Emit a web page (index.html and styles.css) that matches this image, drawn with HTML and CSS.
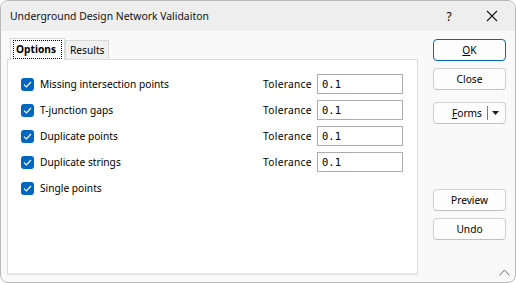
FILE: index.html
```html
<!DOCTYPE html>
<html>
<head>
<meta charset="utf-8">
<link rel="stylesheet" href="styles.css">
</head>
<body>
<div class="window">
  <div class="titlebar">
    <span class="title">Underground Design Network Validaiton</span>
    <span class="help">?</span>
    <span class="close-x">
      <svg width="12" height="12" viewBox="0 0 12 12"><path d="M1 1 L11 11 M11 1 L1 11" stroke="#1a1a1a" stroke-width="1.1" fill="none"/></svg>
    </span>
  </div>
  <div class="content">
    <div class="left">
      <div class="tabs">
        <div class="tab active"><span class="focus">Options</span></div>
        <div class="tab">Results</div>
      </div>
      <div class="panel">
        <div class="row">
          <label class="check"><span class="box"><svg width="9" height="7" viewBox="0 0 9 7"><path d="M1 3.6 L3.4 6 L8 1" stroke="#fff" stroke-width="1.2" fill="none"/></svg></span>Missing intersection points</label>
          <span class="tol">Tolerance</span><span class="field">0.1</span>
        </div>
        <div class="row">
          <label class="check"><span class="box"><svg width="9" height="7" viewBox="0 0 9 7"><path d="M1 3.6 L3.4 6 L8 1" stroke="#fff" stroke-width="1.2" fill="none"/></svg></span>T-junction gaps</label>
          <span class="tol">Tolerance</span><span class="field">0.1</span>
        </div>
        <div class="row">
          <label class="check"><span class="box"><svg width="9" height="7" viewBox="0 0 9 7"><path d="M1 3.6 L3.4 6 L8 1" stroke="#fff" stroke-width="1.2" fill="none"/></svg></span>Duplicate points</label>
          <span class="tol">Tolerance</span><span class="field">0.1</span>
        </div>
        <div class="row">
          <label class="check"><span class="box"><svg width="9" height="7" viewBox="0 0 9 7"><path d="M1 3.6 L3.4 6 L8 1" stroke="#fff" stroke-width="1.2" fill="none"/></svg></span>Duplicate strings</label>
          <span class="tol">Tolerance</span><span class="field">0.1</span>
        </div>
        <div class="row">
          <label class="check"><span class="box"><svg width="9" height="7" viewBox="0 0 9 7"><path d="M1 3.6 L3.4 6 L8 1" stroke="#fff" stroke-width="1.2" fill="none"/></svg></span>Single points</label>
        </div>
      </div>
    </div>
    <div class="buttons">
      <div class="btn default"><u>O</u>K</div>
      <div class="btn b-close">Close</div>
      <div class="btn forms"><span class="forms-label"><u>F</u>orms</span><span class="sep"></span><span class="arrow"><svg width="7" height="4" viewBox="0 0 7 4"><path d="M0 0 L7 0 L3.5 4 Z" fill="#1a1a1a"/></svg></span></div>
      <div class="spacer"></div>
      <div class="btn">Preview</div>
      <div class="btn b-undo">Undo</div>
    </div>
  </div>
  <svg class="grip" width="11" height="7" viewBox="0 0 11 7"><path d="M0.5 6.5 L5.5 1 L10.5 6.5" stroke="#6a6a6a" stroke-width="1" fill="none"/></svg>
</div>
</body>
</html>
```
FILE: styles.css
```css
* { box-sizing: border-box; }
html, body { margin: 0; padding: 0; background: #ffffff; }
body {
  font-family: "Noto Sans", "Segoe UI", sans-serif;
  font-size: 10.2px;
  color: #000000;
}
.window {
  position: relative;
  width: 516px;
  height: 283px;
  border: 1px solid #b9b9b9;
  border-radius: 8px;
  background: #f9f9f9;
  overflow: hidden;
  display: flex;
  flex-direction: column;
}
.titlebar {
  height: 30px;
  flex: none;
  background: #eeeeee;
  display: flex;
  align-items: center;
  padding-left: 9px;
}
.title {
  flex: 1;
  font-size: 10.4px;
  color: #111111;
}
.help {
  width: 40px;
  text-align: center;
  font-size: 12px;
}
.close-x {
  width: 46px;
  height: 30px;
  display: flex;
  align-items: center;
  justify-content: center;
}
.content {
  flex: 1;
  display: flex;
}
.left {
  margin-left: 6px;
  margin-top: 7px;
  width: 411px;
  display: flex;
  flex-direction: column;
}
.tabs {
  display: flex;
  align-items: flex-end;
  height: 21px;
  padding-left: 3px;
}
.tab {
  height: 19px;
  width: 44px;
  padding: 0 0 0 4px;
  border: 1px solid #d9d9d9;
  border-bottom: none;
  background: #f0f0f0;
  display: flex;
  align-items: center;
}
.tab.active {
  width: 55px;
  height: 22px;
  margin-bottom: -1px;
  background: #ffffff;
  font-weight: bold;
  padding: 0 2px;
  position: relative;
  z-index: 1;
}
.focus {
  border: 1px dotted #000;
  padding: 1px 1px 2px 2px;
  line-height: 14px;
  width: 100%;
}
.panel {
  height: 216px;
  background: #ffffff;
  border: 1px solid #dcdcdc;
  border-bottom: 2px solid #e6e6e6;
  padding: 11px 0 0 13px;
}
.row {
  height: 26px;
  display: flex;
  align-items: center;
}
.check {
  width: 242px;
  display: flex;
  align-items: center;
}
.box {
  width: 13px;
  height: 13px;
  border-radius: 3px;
  background: #0067c0;
  display: flex;
  align-items: center;
  justify-content: center;
  margin-right: 6px;
}
.tol {
  width: 54px;
  letter-spacing: 0.3px;
}
.field {
  width: 86px;
  height: 20px;
  border: 1px solid #acacac;
  background: #fff;
  font-family: "DejaVu Sans Mono", "Liberation Mono", monospace;
  font-size: 10.5px;
  padding-left: 4px;
  display: flex;
  align-items: center;
}
.buttons {
  margin-left: 15px;
  margin-top: 8px;
  width: 73px;
  display: flex;
  flex-direction: column;
}
.btn {
  height: 22px;
  border: 1px solid #d0d0d0;
  border-bottom-color: #c0c0c0;
  border-radius: 4px;
  background: #fdfdfd;
  display: flex;
  align-items: center;
  justify-content: center;
  margin-bottom: 7px;
}
.btn.default {
  border: 1px solid #0067c0;
}
.b-close { margin-bottom: 12px; }
.forms {
  justify-content: flex-end;
  padding-right: 4px;
}
.forms-label { margin-right: 5px; }
.sep {
  width: 1px;
  height: 14px;
  background: #7a7a7a;
  margin-right: 4px;
}
.arrow { display: flex; align-items: center; width: 9px; }
.spacer { height: 58px; }
.grip {
  position: absolute;
  right: 5px;
  bottom: 6px;
}
```
